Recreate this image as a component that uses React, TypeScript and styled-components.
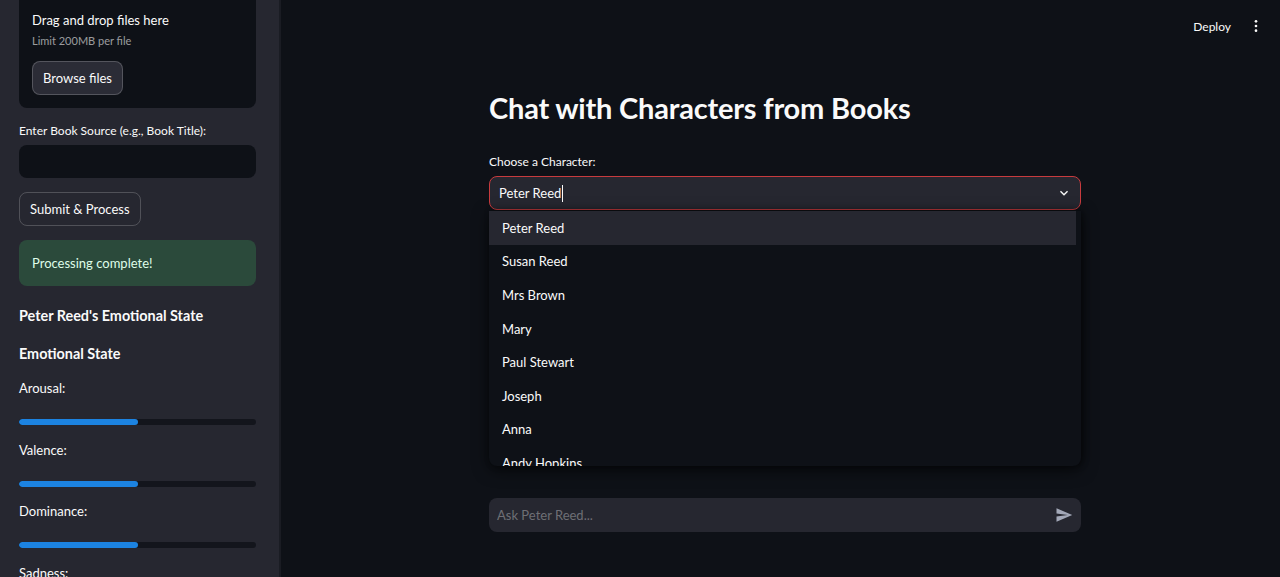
import React from "react";
import styled, { createGlobalStyle } from "styled-components";

const GlobalStyle = createGlobalStyle`
  html, body { margin: 0; padding: 0; background: #0e1117; }
  body {
    font-family: Lato, "Noto Sans", sans-serif;
    color: #fafafa;
    -webkit-font-smoothing: antialiased;
  }
  * { box-sizing: border-box; }
`;

const Page = styled.div`
  display: flex;
  width: 1280px;
  height: 577px;
  overflow: hidden;
`;

const Sidebar = styled.aside`
  width: 281px;
  flex: none;
  background: #262730;
  padding: 0 23px 0 19px;
  display: flex;
  flex-direction: column;
  border-right: 2px solid #1a1c23;
  & > * { flex-shrink: 0; }
`;

const Dropzone = styled.div`
  background: #0e1117;
  border-radius: 0 0 8px 8px;
  padding: 10px 13px 13px;
  display: flex;
  flex-direction: column;
`;

const DropTitle = styled.div`
  font-size: 13px;
  line-height: 20px;
  color: #fafafa;
`;

const DropHint = styled.div`
  font-size: 11px;
  line-height: 18px;
  margin-top: 2px;
  color: rgba(250, 250, 250, 0.6);
`;

const Button = styled.button<{ $mt?: number; $ghost?: boolean }>`
  align-self: flex-start;
  height: 34px;
  padding: 0 10px;
  margin-top: ${(p) => p.$mt ?? 0}px;
  border-radius: 8px;
  border: 1px solid rgba(250, 250, 250, 0.2);
  background: ${(p) => (p.$ghost ? "transparent" : "#2b2c36")};
  color: #fafafa;
  font-family: inherit;
  font-size: 13px;
  line-height: 1;
`;

const FieldLabel = styled.label<{ $mt?: number }>`
  display: block;
  font-size: 12px;
  line-height: 16px;
  color: #fafafa;
  margin-top: ${(p) => p.$mt ?? 0}px;
`;

const TextBox = styled.div`
  height: 33px;
  margin-top: 6px;
  background: #0e1117;
  border-radius: 8px;
`;

const SuccessBox = styled.div`
  margin-top: 14px;
  height: 46px;
  border-radius: 8px;
  background: #2b4a3b;
  color: #dffde9;
  font-size: 13px;
  display: flex;
  align-items: center;
  padding: 0 13px;
`;

const SideHeading = styled.div<{ $mt: number }>`
  font-size: 14.4px;
  font-weight: 700;
  line-height: 20px;
  margin-top: ${(p) => p.$mt}px;
`;

const MetricLabel = styled.div<{ $mt: number }>`
  font-size: 13px;
  line-height: 20px;
  margin-top: ${(p) => p.$mt}px;
`;

const Track = styled.div`
  margin-top: 21px;
  height: 6px;
  border-radius: 3px;
  background: #13151c;
  overflow: hidden;
`;

const Fill = styled.div`
  height: 100%;
  border-radius: 3px;
  background: #1c83e1;
`;

const Main = styled.main`
  flex: 1;
  display: flex;
  flex-direction: column;
  position: relative;
`;

const Header = styled.header`
  height: 52px;
  display: flex;
  align-items: center;
  justify-content: flex-end;
  gap: 17px;
  padding-right: 16px;
`;

const DeployLink = styled.span`
  font-size: 12px;
  color: #fafafa;
`;

const Kebab = styled.svg`
  width: 16px;
  height: 16px;
  color: #fafafa;
`;

const Content = styled.section`
  width: 592px;
  margin-left: 208px;
  display: flex;
  flex-direction: column;
  flex: 1;
  position: relative;
`;

const Title = styled.h1`
  margin: 38px 0 0;
  font-size: 29px;
  font-weight: 700;
  line-height: 36px;
  letter-spacing: -0.2px;
`;

const SelectWrap = styled.div`
  position: relative;
  margin-top: 6px;
`;

const Select = styled.div`
  height: 34px;
  border: 1px solid #c73b3e;
  border-radius: 8px;
  background: #262730;
  display: flex;
  align-items: center;
  padding: 0 8px 0 9px;
  font-size: 13px;
`;

const Caret = styled.span`
  width: 1px;
  height: 17px;
  background: #fafafa;
  margin-left: 1px;
`;

const Chevron = styled.svg`
  margin-left: auto;
  width: 16px;
  height: 16px;
`;

const Menu = styled.ul`
  position: absolute;
  top: 35px;
  left: 0;
  width: 592px;
  height: 255px;
  margin: 0;
  padding: 0 5px 0 0;
  list-style: none;
  overflow: hidden;
  background: #0e1117;
  border-radius: 0 0 8px 8px;
  box-shadow: 0 4px 16px rgba(0, 0, 0, 0.6), 2px 0 6px rgba(0, 0, 0, 0.4);
  z-index: 2;
`;

const MenuItem = styled.li<{ $active?: boolean }>`
  height: 33.6px;
  display: flex;
  align-items: center;
  padding-left: 13px;
  font-size: 13px;
  background: ${(p) => (p.$active ? "#262730" : "transparent")};
`;

const ChatBar = styled.div`
  margin-top: auto;
  margin-bottom: 45px;
  height: 34px;
  border-radius: 8px;
  background: #262730;
  display: flex;
  align-items: center;
  padding: 0 8px 0 8px;
  font-size: 13px;
  color: rgba(250, 250, 250, 0.35);
`;

const SendIcon = styled.svg`
  margin-left: auto;
  width: 18px;
  height: 18px;
  color: #a3a8b8;
`;

const characters = [
  "Peter Reed",
  "Susan Reed",
  "Mrs Brown",
  "Mary",
  "Paul Stewart",
  "Joseph",
  "Anna",
  "Andy Hopkins",
  "Tom",
];

const metrics: { label: string; value: number; mt: number }[] = [
  { label: "Arousal:", value: 0.5, mt: 14 },
  { label: "Valence:", value: 0.5, mt: 15 },
  { label: "Dominance:", value: 0.5, mt: 14 },
];

export default function App() {
  return (
    <>
      <GlobalStyle />
      <Page>
        <Sidebar>
          <Dropzone>
            <DropTitle>Drag and drop files here</DropTitle>
            <DropHint>Limit 200MB per file</DropHint>
            <Button $mt={11}>Browse files</Button>
          </Dropzone>
          <FieldLabel $mt={15}>Enter Book Source (e.g., Book Title):</FieldLabel>
          <TextBox />
          <Button $mt={14} $ghost>
            Submit &amp; Process
          </Button>
          <SuccessBox>Processing complete!</SuccessBox>
          <SideHeading $mt={20}>Peter Reed's Emotional State</SideHeading>
          <SideHeading $mt={18}>Emotional State</SideHeading>
          {metrics.map((m) => (
            <React.Fragment key={m.label}>
              <MetricLabel $mt={m.mt}>{m.label}</MetricLabel>
              <Track>
                <Fill style={{ width: `${m.value * 100}%` }} />
              </Track>
            </React.Fragment>
          ))}
          <MetricLabel $mt={15}>Sadness:</MetricLabel>
        </Sidebar>
        <Main>
          <Header>
            <DeployLink>Deploy</DeployLink>
            <Kebab viewBox="0 0 24 24" fill="currentColor">
              <circle cx="12" cy="5" r="2" />
              <circle cx="12" cy="12" r="2" />
              <circle cx="12" cy="19" r="2" />
            </Kebab>
          </Header>
          <Content>
            <Title>Chat with Characters from Books</Title>
            <FieldLabel $mt={28}>Choose a Character:</FieldLabel>
            <SelectWrap>
              <Select>
                Peter Reed
                <Caret />
                <Chevron viewBox="0 0 24 24" fill="#fafafa">
                  <path d="M16.59 8.59 12 13.17 7.41 8.59 6 10l6 6 6-6z" />
                </Chevron>
              </Select>
              <Menu>
                {characters.map((c, i) => (
                  <MenuItem key={c} $active={i === 0}>
                    {c}
                  </MenuItem>
                ))}
              </Menu>
            </SelectWrap>
            <ChatBar>
              Ask Peter Reed...
              <SendIcon viewBox="0 0 24 24" fill="currentColor">
                <path d="M2.01 21 23 12 2.01 3 2 10l15 2-15 2z" />
              </SendIcon>
            </ChatBar>
          </Content>
        </Main>
      </Page>
    </>
  );
}
